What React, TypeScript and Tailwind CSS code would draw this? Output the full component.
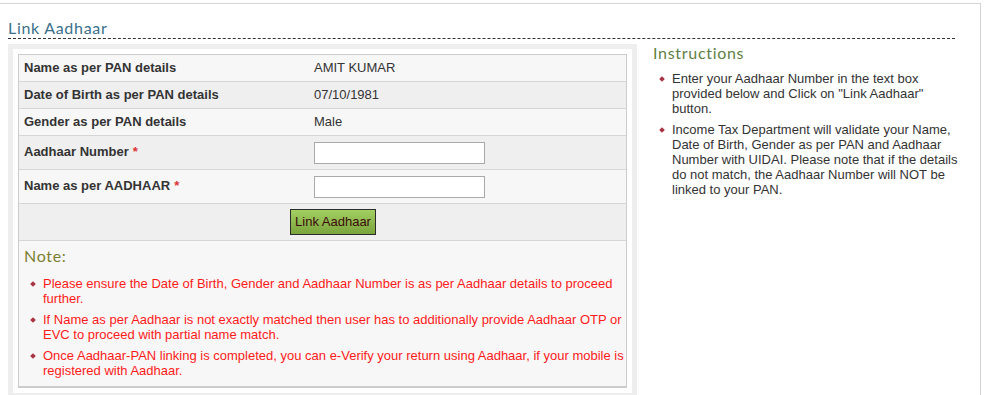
import React from "react";

const details = [
  { label: "Name as per PAN details", value: "AMIT KUMAR", bg: "bg-[#f7f7f7]" },
  { label: "Date of Birth as per PAN details", value: "07/10/1981", bg: "bg-[#efefef]" },
  { label: "Gender as per PAN details", value: "Male", bg: "bg-[#f7f7f7]" },
];

const notes = [
  "Please ensure the Date of Birth, Gender and Aadhaar Number is as per Aadhaar details to proceed further.",
  "If Name as per Aadhaar is not exactly matched then user has to additionally provide Aadhaar OTP or EVC to proceed with partial name match.",
  "Once Aadhaar-PAN linking is completed, you can e-Verify your return using Aadhaar, if your mobile is registered with Aadhaar.",
];

const instructions = [
  'Enter your Aadhaar Number in the text box provided below and Click on "Link Aadhaar" button.',
  "Income Tax Department will validate your Name, Date of Birth, Gender as per PAN and Aadhaar Number with UIDAI. Please note that if the details do not match, the Aadhaar Number will NOT be linked to your PAN.",
];

// Century Gothic stand-in for the section titles
const gothic = "font-['Lato','DejaVu_Sans',sans-serif] font-normal text-[16px] leading-[18px] tracking-[0.7px]";

export default function App() {
  return (
    <div className="h-[395px] w-[985px] overflow-hidden bg-white font-['Liberation_Sans',Arial,sans-serif] text-[13px] text-[#333]">
      <div className="mt-[3px] h-[400px] w-[981px] border-t border-r border-[#d4d4d4] pl-[8px]">
        {/* Title */}
        <div className="w-[947px] border-b border-dashed border-[#333] pt-[15px] pb-[1px]">
          <h1 className={`${gothic} text-[#3a6f8c]`}>Link Aadhaar</h1>
        </div>

        <div className="mt-[5px] flex gap-[16px]">
          {/* Form panel */}
          <div className="w-[629px] shrink-0 bg-[#eeeeee] p-[5px]">
            <div className="bg-white p-[5px]">
              <div className="border border-b-2 border-[#cccccc]">
                {details.map((d) => (
                  <Row key={d.label} bg={d.bg} className="h-[27px] items-center">
                    <Label>{d.label}</Label>
                    <span>{d.value}</span>
                  </Row>
                ))}

                <Row bg="bg-[#efefef]" className="h-[34px] pt-[6px]">
                  <Label required>Aadhaar Number</Label>
                  <Input />
                </Row>
                <Row bg="bg-[#f7f7f7]" className="h-[34px] pt-[6px]">
                  <Label required>Name as per AADHAAR</Label>
                  <Input />
                </Row>

                <div className="flex h-[37px] items-center border-b border-[#d6d6d6] bg-[#efefef] pl-[271px]">
                  <button className="h-[26px] w-[86px] border border-[#2b2b2b] bg-gradient-to-b from-[#a2cf62] to-[#7aa43c] text-[13px] text-[#3a0a0a]">
                    Link Aadhaar
                  </button>
                </div>

                <div className="bg-[#f7f7f7] pt-[6px] pb-[8px] pl-[5px]">
                  <p className={`${gothic} text-[#7c7f33]`}>Note:</p>
                  <ul className="mt-[11px] space-y-[6px]">
                    {notes.map((n) => (
                      <Bullet key={n} className="text-[#ff1a1a]">
                        {n}
                      </Bullet>
                    ))}
                  </ul>
                </div>
              </div>
            </div>
          </div>

          {/* Instructions */}
          <div className="w-[320px]">
            <h2 className={`${gothic} text-[#5f7f45]`}>Instructions</h2>
            <ul className="mt-[9px] w-[312px] space-y-[6px]">
              {instructions.map((t) => (
                <Bullet key={t}>{t}</Bullet>
              ))}
            </ul>
          </div>
        </div>
      </div>
    </div>
  );
}

function Row({ bg, className, children }: { bg: string; className?: string; children: React.ReactNode }) {
  return <div className={`flex border-b border-[#d6d6d6] ${bg} ${className ?? ""}`}>{children}</div>;
}

function Label({ children, required }: { children: React.ReactNode; required?: boolean }) {
  return (
    <span className="w-[295px] shrink-0 pl-[5px] font-bold">
      {children}
      {required && <span className="ml-[4px] text-[#d33]">*</span>}
    </span>
  );
}

function Input() {
  return <input type="text" className="h-[22px] w-[171px] border border-[#a9a9a9] bg-white" />;
}

function Bullet({ children, className }: { children: React.ReactNode; className?: string }) {
  return (
    <li className={`flex leading-[15px] ${className ?? ""}`}>
      <span className="mt-[6px] ml-[7px] mr-[8px] h-[4px] w-[4px] shrink-0 rotate-45 bg-[#a83444]" />
      <span>{children}</span>
    </li>
  );
}
